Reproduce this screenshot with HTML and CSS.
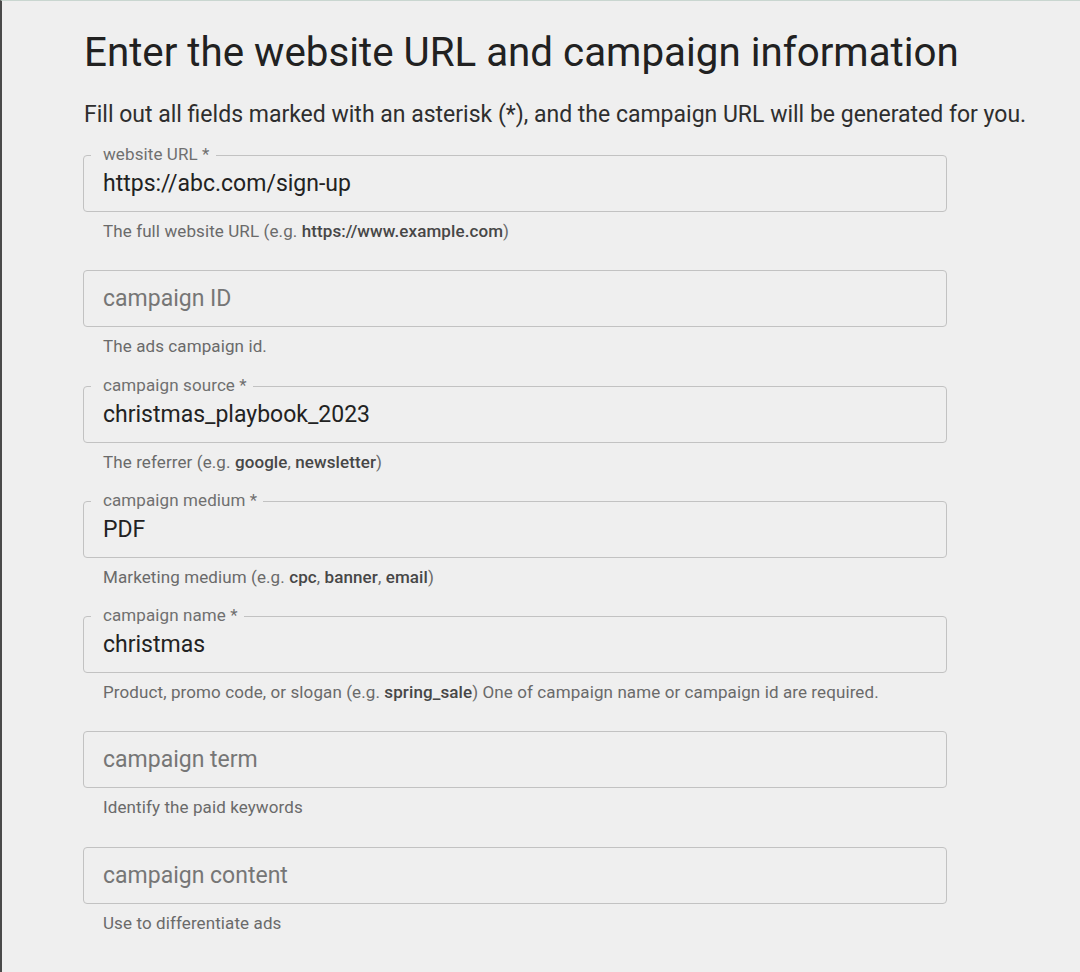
FILE: index.html
```html
<!DOCTYPE html>
<html lang="en">
<head>
  <meta charset="UTF-8" />
  <meta name="viewport" content="width=device-width, initial-scale=1.0"/>
  <title>Campaign URL Builder</title>
  <link rel="stylesheet" href="styles.css">
</head>
<body>
  <div class="page">
    <h1>Enter the website URL and campaign information</h1>
    <p class="intro">Fill out all fields marked with an asterisk (*), and the campaign URL will be generated for you.</p>

    <form class="fields">
      <div class="field">
        <div class="box">
          <label for="url">website URL *</label>
          <input id="url" type="text" value="https://abc.com/sign-up">
        </div>
        <p class="help">The full website URL (e.g. <b>https://www.example.com</b>)</p>
      </div>

      <div class="field">
        <div class="box">
          <input id="cid" type="text" placeholder="campaign ID">
        </div>
        <p class="help">The ads campaign id.</p>
      </div>

      <div class="field">
        <div class="box">
          <label for="source">campaign source *</label>
          <input id="source" type="text" value="christmas_playbook_2023">
        </div>
        <p class="help">The referrer (e.g. <b>google</b>, <b>newsletter</b>)</p>
      </div>

      <div class="field">
        <div class="box">
          <label for="medium">campaign medium *</label>
          <input id="medium" type="text" value="PDF">
        </div>
        <p class="help">Marketing medium (e.g. <b>cpc</b>, <b>banner</b>, <b>email</b>)</p>
      </div>

      <div class="field">
        <div class="box">
          <label for="name">campaign name *</label>
          <input id="name" type="text" value="christmas">
        </div>
        <p class="help">Product, promo code, or slogan (e.g. <b>spring_sale</b>) One of campaign name or campaign id are required.</p>
      </div>

      <div class="field">
        <div class="box">
          <input id="term" type="text" placeholder="campaign term">
        </div>
        <p class="help">Identify the paid keywords</p>
      </div>

      <div class="field">
        <div class="box">
          <input id="content" type="text" placeholder="campaign content">
        </div>
        <p class="help">Use to differentiate ads</p>
      </div>
    </form>
  </div>
</body>
</html>
```

FILE: styles.css
```css
* {
  margin: 0;
  padding: 0;
  box-sizing: border-box;
}

html, body {
  height: 100%;
  background: #efefef;
  font-family: Roboto, "Liberation Sans", Arial, sans-serif;
  color: #222;
}

.page {
  min-height: 100%;
  border-top: 1px solid #c9d6d0;
  border-left: 2px solid #4a4a4a;
  padding: 28px 0 0 82px;
}

h1 {
  font-size: 40.3px;
  font-weight: 400;
  line-height: 48px;
  color: #212121;
}

.intro {
  margin-top: 24px;
  font-size: 23px;
  line-height: 27px;
  color: #2e2e2e;
}

.fields {
  margin: 27px 0 0 -1px;
  width: 864px;
}

.field {
  margin-bottom: 29.3px;
}

.box {
  position: relative;
  height: 57px;
  border: 1px solid #c2c2c2;
  border-radius: 4px;
}

.box label {
  position: absolute;
  top: -12px;
  left: 7px;
  padding: 0 6px 0 12px;
  background: #efefef;
  font-size: 17px;
  line-height: 20px;
  letter-spacing: 0.1px;
  color: #707070;
}

.box input {
  width: 100%;
  height: 100%;
  border: none;
  outline: none;
  background: transparent;
  padding: 0 19px;
  font-family: inherit;
  font-size: 23px;
  color: #222;
}

.box input::placeholder {
  color: #767676;
}

.help {
  margin-top: 9px;
  padding-left: 20px;
  font-size: 17px;
  line-height: 20px;
  letter-spacing: 0.1px;
  color: #6a6a6a;
}

.help b {
  font-weight: 500;
  color: #474747;
}
```
